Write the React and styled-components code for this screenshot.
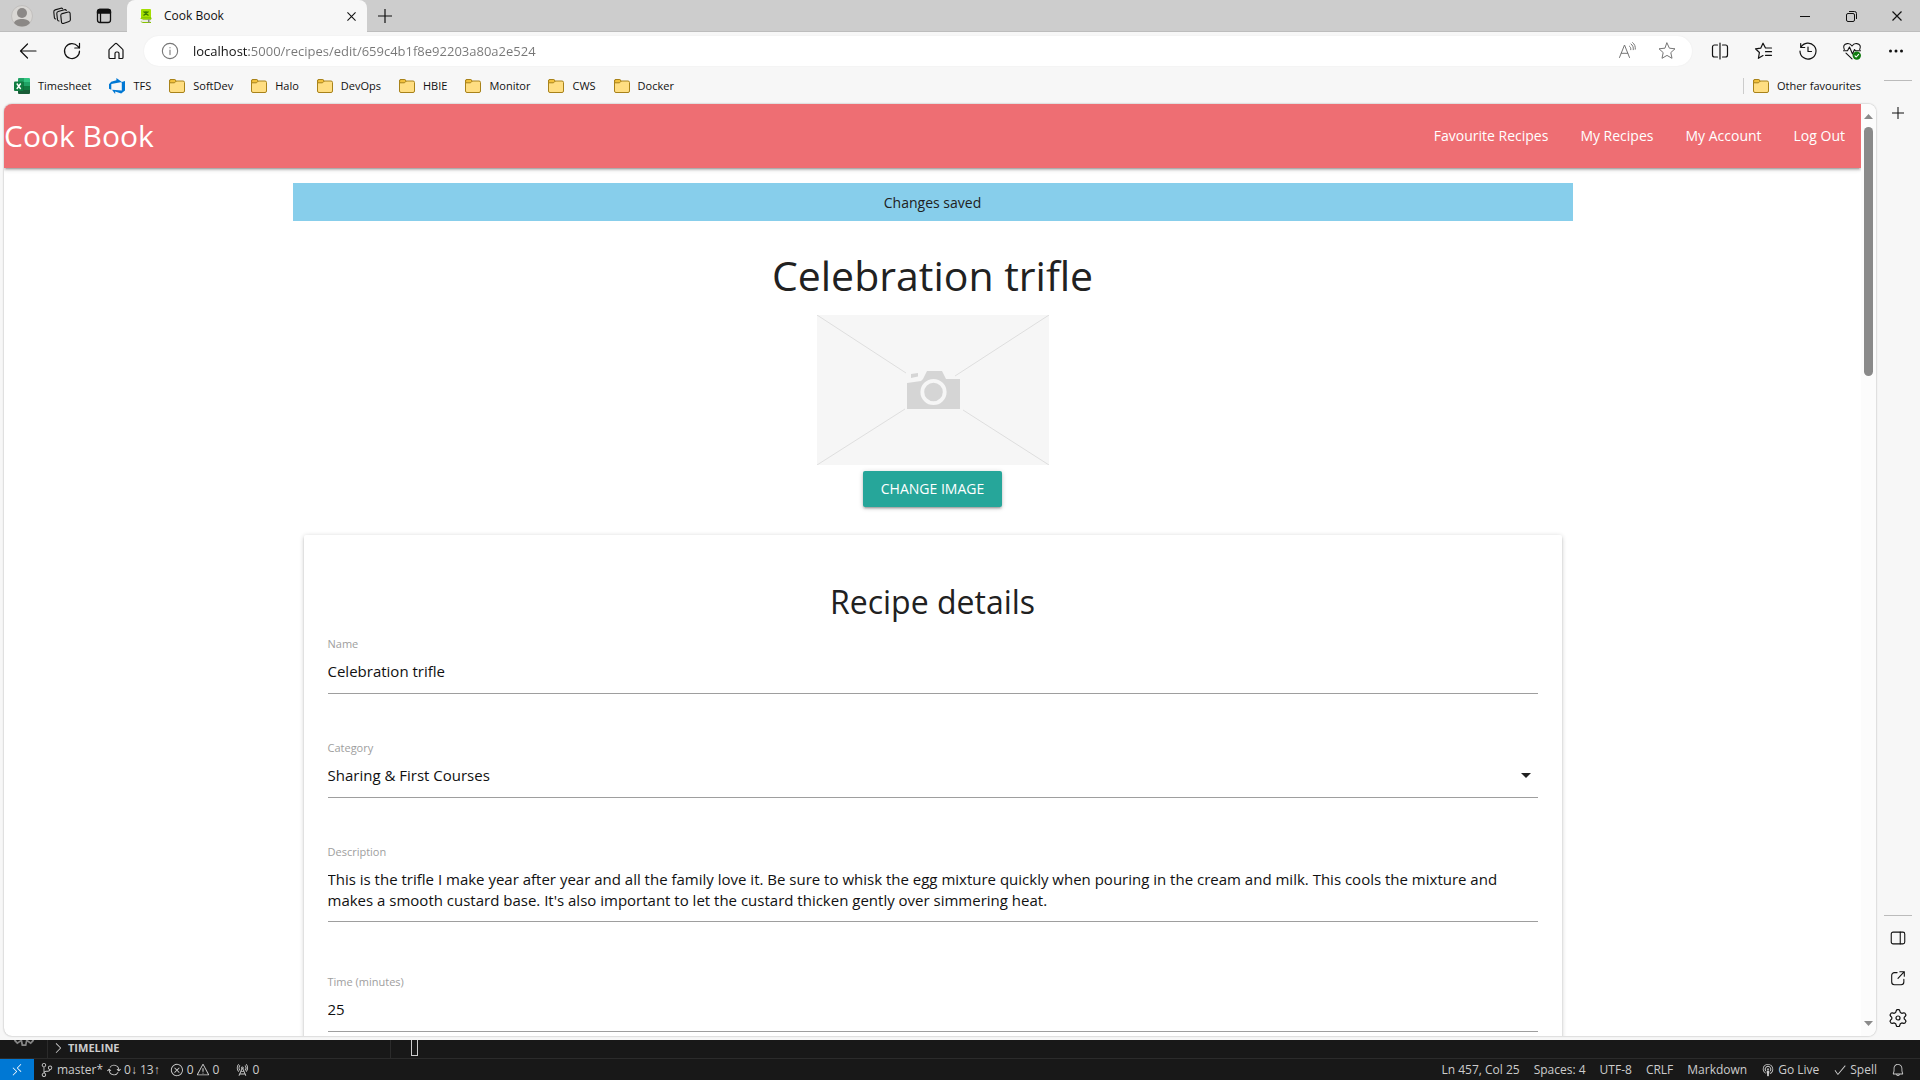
import React from "react";
import styled, { createGlobalStyle, css } from "styled-components";
import {
  VscRemote,
  VscSourceControl,
  VscSync,
  VscError,
  VscWarning,
  VscRadioTower,
  VscBroadcast,
  VscCheck,
  VscBell,
  VscChevronRight,
  VscSettingsGear,
} from "react-icons/vsc";

const Global = createGlobalStyle`
  *, *::before, *::after { box-sizing: border-box; }
  html, body { margin: 0; background: #181818; overflow: hidden; }
  body, button, input, select, textarea {
    font-family: "Open Sans", "Noto Sans", sans-serif;
  }
  h1, h2, ul { margin: 0; padding: 0; font-weight: 400; list-style: none; }
  a { color: inherit; text-decoration: none; }
  svg { display: block; flex: none; }
`;

/* ---------- browser window ---------- */

const Desktop = styled.div`
  height: 100vh;
  display: flex;
  flex-direction: column;
`;

const BrowserWindow = styled.div`
  flex: 1;
  min-height: 0;
  display: flex;
  flex-direction: column;
  background: #f7f7f7;
  color: #111;
`;

const PlainButton = styled.button`
  display: flex;
  align-items: center;
  justify-content: center;
  padding: 0;
  border: 0;
  background: none;
  color: inherit;
`;

const TabStrip = styled.div`
  display: flex;
  height: 32px;
  background: #cdcdcd;
  box-shadow: inset 0 -1px 0 #bdbdbd;
`;

const StripButton = styled(PlainButton)`
  width: ${(p) => p.$width || 42}px;
`;

const Tab = styled.div`
  display: flex;
  align-items: center;
  width: 240px;
  padding: 0 8px 0 12px;
  background: #f7f7f7;
  border-radius: 8px 8px 0 0;
  font-size: 12px;
  line-height: 32px;
`;

const TabTitle = styled.span`
  flex: 1;
  padding-left: 11px;
`;

const WindowControls = styled.div`
  display: flex;
  margin-left: auto;
`;

const Toolbar = styled.div`
  display: flex;
  align-items: center;
  height: 40px;
  padding: 0 2px 2px 6px;
`;

const ToolButton = styled(PlainButton)`
  width: 44px;
  height: 30px;
`;

const AddressBar = styled.form`
  flex: 1;
  display: flex;
  align-items: center;
  height: 30px;
  margin: 0 6px;
  padding: 0 5px 0 17px;
  border-radius: 15px;
  background: #fff;
  color: #767676;
  box-shadow: 0 0 2px rgba(0, 0, 0, 0.06);
`;

const AddressInput = styled.input`
  flex: 1;
  margin-left: 14px;
  padding: 0;
  border: 0;
  outline: 0;
  font-size: 13px;
  line-height: 20px;
  color: transparent;
  background: linear-gradient(90deg, #111 56px, #767676 56px);
  background-clip: text;
`;

const AddressButton = styled(PlainButton)`
  width: 40px;
  height: 30px;
`;

const Body = styled.div`
  flex: 1;
  min-height: 0;
  display: flex;
`;

const BodyMain = styled.div`
  flex: 1;
  min-width: 0;
  display: flex;
  flex-direction: column;
  padding: 0 0 4px 4px;
`;

const Bookmarks = styled.nav`
  display: flex;
  align-items: center;
  gap: 18px;
  height: 32px;
  padding: 0 15px 4px 10px;
  font-size: 11px;
  line-height: 16px;
`;

const Bookmark = styled.a`
  display: flex;
  align-items: center;
  gap: 8px;
  ${(p) =>
    p.$last &&
    css`
      margin-left: auto;
      padding-left: 9px;
      border-left: 1px solid #ccc;
    `}
`;

const Sidebar = styled.aside`
  display: flex;
  flex-direction: column;
  align-items: center;
  width: 44px;
  padding: 8px 1px 2px 0;
`;

const SideButton = styled(PlainButton)`
  width: 40px;
  height: 40px;
`;

const SideRule = styled.hr`
  width: 28px;
  margin: 0 0 2px;
  border: 0;
  border-top: 1px solid #bbb;
`;

const SideTop = styled.div`
  padding-top: 10px;
  flex: 1;
`;

const Viewport = styled.div`
  flex: 1;
  min-height: 0;
  display: flex;
  overflow: hidden;
  border-radius: 8px;
  background: #fff;
  box-shadow: 0 0 2px rgba(0, 0, 0, 0.35);
`;

const ScrollTrack = styled.div`
  display: flex;
  flex-direction: column;
  align-items: center;
  justify-content: space-between;
  width: 15px;
  padding: 10px 0;
  background: #fcfcfc;
`;

const ScrollThumb = styled.div`
  width: 9px;
  height: 249px;
  margin-top: 8px;
  border-radius: 5px;
  background: #8a8a8a;
`;

/* ---------- recipe page ---------- */

const Page = styled.div`
  flex: 1;
  min-width: 0;
  overflow: hidden;
  color: #212121;
`;

const NavBar = styled.nav`
  display: flex;
  align-items: center;
  justify-content: space-between;
  height: 64px;
  background: #ee6e73;
  color: #fff;
  box-shadow: 0 2px 2px rgba(0, 0, 0, 0.14), 0 3px 1px -2px rgba(0, 0, 0, 0.12),
    0 1px 5px rgba(0, 0, 0, 0.2);
`;

const Brand = styled.a`
  font-size: 30px;
  line-height: 66px;
`;

const NavLinks = styled.ul`
  display: flex;
  font-size: 14px;
  line-height: 66px;
`;

const NavLink = styled.a`
  display: block;
  padding: 0 16px;
`;

const Container = styled.main`
  max-width: 1280px;
  margin: 0 auto;
  padding-top: 15px;
`;

const Flash = styled.div`
  height: 38px;
  background: #87ceeb;
  font-size: 14px;
  line-height: 40px;
  text-align: center;
`;

const Hero = styled.section`
  display: flex;
  flex-direction: column;
  align-items: center;
`;

const PageTitle = styled.h1`
  margin: 27px 0 13px;
  font-size: 41px;
  line-height: 54px;
`;

const ChangeButton = styled.button`
  height: 36px;
  margin-top: 6px;
  padding: 0 18px;
  border: 0;
  border-radius: 2px;
  background: #26a69a;
  color: #fff;
  font-size: 14px;
  line-height: 36px;
  text-transform: uppercase;
  box-shadow: 0 2px 2px rgba(0, 0, 0, 0.14), 0 3px 1px -2px rgba(0, 0, 0, 0.12),
    0 1px 5px rgba(0, 0, 0, 0.2);
`;

const Card = styled.form`
  margin: 28px 11px 0;
  padding: 45px 24px;
  border-radius: 2px;
  box-shadow: 0 2px 2px rgba(0, 0, 0, 0.14), 0 3px 1px -2px rgba(0, 0, 0, 0.12),
    0 1px 5px rgba(0, 0, 0, 0.2);
`;

const CardTitle = styled.h2`
  margin-bottom: 12px;
  font-size: 32px;
  line-height: 44px;
  text-align: center;
`;

const Field = styled.div`
  display: flex;
  flex-direction: column;
  margin-bottom: ${(p) => (p.$tall ? 52 : 46)}px;
`;

const FieldLabel = styled.label`
  color: #9e9e9e;
  font-size: 11px;
  line-height: 16px;
`;

const control = css`
  width: 100%;
  margin: 0;
  border: 0;
  border-bottom: 1px solid #9e9e9e;
  border-radius: 0;
  outline: 0;
  background: transparent;
  color: #111;
  font-size: 15px;
`;

const TextInput = styled.input`
  ${control}
  height: 42px;
  padding: 0 0 4px;
`;

const SelectBox = styled.div`
  display: grid;
  align-items: center;

  > * {
    grid-area: 1 / 1;
  }

  > svg {
    justify-self: end;
    margin-right: 7px;
    margin-bottom: 3px;
    pointer-events: none;
  }
`;

const Select = styled.select`
  ${control}
  height: 42px;
  padding: 0 0 4px;
  appearance: none;
`;

const TextArea = styled.textarea`
  ${control}
  display: block;
  height: 62px;
  padding: 9px 0 10px;
  line-height: 21px;
  overflow: hidden;
  resize: none;
`;

/* ---------- editor behind the browser ---------- */

const Editor = styled.footer`
  height: 40px;
  background: #181818;
  color: #ccc;
  font-size: 12px;
`;

const Panel = styled.div`
  display: flex;
  height: 19px;
  overflow: hidden;
  border-bottom: 1px solid #2b2b2b;
`;

const ActivityEdge = styled.div`
  display: flex;
  align-items: flex-end;
  justify-content: center;
  width: 47px;
  height: 6px;
  color: #868686;
`;

const TimelineRow = styled(PlainButton)`
  justify-content: flex-start;
  gap: 2px;
  width: 344px;
  padding: 0 0 3px 2px;
  border: solid #2b2b2b;
  border-width: 0 1px;
  font-size: 11px;
  font-weight: 700;
`;

const Cursor = styled.div`
  width: 7px;
  height: 16px;
  margin-left: 20px;
  border: 1px solid #ccc;
  border-top: 0;
`;

const StatusBar = styled.div`
  display: flex;
  align-items: center;
  height: 21px;
  padding-right: 15px;
  line-height: 20px;
`;

const RemoteButton = styled(PlainButton)`
  width: 34px;
  height: 21px;
  margin-right: 6px;
  background: #0078d4;
  color: #fff;
`;

const StatusItem = styled(PlainButton)`
  gap: 3px;
  margin-right: ${(p) => p.$gap || 16}px;
  font-size: 12px;
  white-space: pre;
`;

const StatusRight = styled.div`
  display: flex;
  align-items: center;
  gap: 14px;
  margin-left: auto;

  > button {
    margin: 0;
  }
`;

/* ---------- drawings ---------- */

function Icon({ size = 20, width = 1, children, ...rest }) {
  return (
    <svg
      width={size}
      height={size}
      viewBox="0 0 20 20"
      fill="none"
      stroke="currentColor"
      strokeWidth={width}
      strokeLinecap="round"
      strokeLinejoin="round"
      aria-hidden="true"
      {...rest}
    >
      {children}
    </svg>
  );
}

const Avatar = () => (
  <svg width="22" height="22" viewBox="0 0 22 22" aria-hidden="true">
    <circle cx="11" cy="11" r="10.5" fill="#d9d7d4" stroke="#c1bfbd" />
    <circle cx="11" cy="8" r="5" fill="#8b8886" />
    <path d="M3 18c1-3 4-4 8-4s7 1 8 4c-2 2.400-5 3.500-8 3.500S5 20.400 3 18z" fill="#8b8886" />
  </svg>
);

const Workspaces = () => (
  <Icon width={1.1}>
    <path d="M10.200 7.600l6-1.600a1.500 1.500 0 0 1 1.900 1.300l.3 6.200a2 2 0 0 1-1.400 2l-5.600 1.900a1.500 1.500 0 0 1-1.900-1.300l-.7-6.500a2 2 0 0 1 1.400-2z" />
    <path d="M7 15a1.500 1.500 0 0 1-1.500-1.300L4.800 7.600a2 2 0 0 1 1.400-2.100l6.300-1.800a1.500 1.500 0 0 1 1.800.8" />
    <path d="M3.700 13a1.500 1.500 0 0 1-1.300-1.300L1.800 6a2 2 0 0 1 1.400-2.100l5.700-1.700a1.500 1.500 0 0 1 1.700.6" />
  </Icon>
);

const TabActions = () => (
  <Icon width={1.3}>
    <rect x="3.500" y="3.500" width="13" height="13" rx="2.500" />
    <path d="M3.500 6V5.500a2 2 0 0 1 2-2h9a2 2 0 0 1 2 2V7h-13z" fill="currentColor" />
    <path d="M6.500 7v9" />
  </Icon>
);

const Favicon = () => (
  <svg width="14" height="16" viewBox="0 0 14 16" aria-hidden="true">
    <path d="M3 1h8a1 1 0 0 1 1 1v9H2V2a1 1 0 0 1 1-1z" fill="#a4de02" />
    <path d="M2 11h10v3.500H3.500A1.500 1.500 0 0 1 2 13z" fill="#e9e9e2" />
    <path d="M2 11c0-1 .6-1.300 1.400-1.300H12v1.500H3.500M2.200 13.500c.3.800.8 1 1.500 1H12" stroke="#86c400" fill="none" />
    <path d="M4.500 3.500l5 4M9.500 3.500l-5 4M7 3v3" stroke="#3b7d00" strokeWidth="1.300" fill="none" />
    <path d="M9 11.500h1.500V15l-.8-.8-.7.800z" fill="#888" />
  </svg>
);

const Cross = ({ size = 10 }) => (
  <svg width={size} height={size} viewBox="0 0 10 10" stroke="currentColor" strokeWidth="1.200" aria-hidden="true">
    <path d="M.5.5l9 9M9.500.5l-9 9" />
  </svg>
);

const Plus = ({ size = 14 }) => (
  <svg width={size} height={size} viewBox="0 0 14 14" stroke="currentColor" strokeWidth="1.200" aria-hidden="true">
    <path d="M7 0v14M0 7h14" />
  </svg>
);

const Minimize = () => (
  <svg width="10" height="10" viewBox="0 0 10 10" stroke="currentColor" aria-hidden="true">
    <path d="M0 5.500h10" />
  </svg>
);

const Restore = () => (
  <svg width="11" height="11" viewBox="0 0 11 11" fill="none" stroke="currentColor" aria-hidden="true">
    <rect x=".5" y="2.500" width="8" height="8" rx="1.500" />
    <path d="M3 .5h5.500a2 2 0 0 1 2 2V8" />
  </svg>
);

const BackIcon = () => (
  <Icon width={1.2}>
    <path d="M18 10H2.500M9.500 3 2.500 10l7 7" />
  </Icon>
);

const ReloadIcon = () => (
  <Icon width={1.2}>
    <path d="M17.500 10A7.500 7.500 0 1 1 15.700 5.200L17.300 7M17.500 2.300V7h-4.700" />
  </Icon>
);

const HomeIcon = () => (
  <Icon width={1.2}>
    <path d="M3 9.200a1.500 1.500 0 0 1 .5-1.100l5.500-5.200a1.500 1.500 0 0 1 2 0l5.500 5.200a1.500 1.500 0 0 1 .5 1.100v7.300a1 1 0 0 1-1 1h-3v-5a1.500 1.500 0 0 0-1.500-1.500h-1a1.500 1.500 0 0 0-1.500 1.500v5H4a1 1 0 0 1-1-1z" />
  </Icon>
);

const InfoIcon = () => (
  <Icon size={18} width={1.2}>
    <circle cx="10" cy="10" r="8.500" />
    <path d="M10 9v5M10 6.200v.3" />
  </Icon>
);

const ReadAloudIcon = () => (
  <Icon>
    <path d="M2.500 16.500 7.500 4l5 12.500M4.200 12.300h6.600M12.500 5.200c1 .8 1.500 2 1.300 3.500M14 3c1.800 1.300 2.600 3.300 2.300 5.700M15.600 1.600c2.100 1.600 3 4 2.700 6.600" />
  </Icon>
);

const StarIcon = () => (
  <Icon>
    <path d="M10 2l2.400 5.200 5.600.6-4.200 3.800 1.200 5.700L10 14.400l-5 2.900 1.200-5.700L2 7.800l5.600-.6z" />
  </Icon>
);

const SplitIcon = () => (
  <Icon width={1.2}>
    <path d="M7.500 4H4.500a2 2 0 0 0-2 2v8a2 2 0 0 0 2 2h3M12.500 4h3a2 2 0 0 1 2 2v8a2 2 0 0 1-2 2h-3M10 2v16" />
  </Icon>
);

const FavouritesIcon = () => (
  <Icon width={1.2}>
    <path d="M17.500 7h-6L9 2.200 6.700 7.200l-5.200.6 3.900 3.700-1 5.800L9 14.600M11.500 10.700h6M11.500 14.300h6" />
  </Icon>
);

const HistoryIcon = () => (
  <Icon width={1.2}>
    <path d="M3 6.200A8 8 0 1 1 2 10M2.700 2.500v4h4M10 6v4.500h3.500" />
  </Icon>
);

const HealthIcon = () => (
  <Icon width={1.1}>
    <path d="M2.300 8.500C.8 5.500 2 3 5.200 2.600 7.400 2.300 9 3.500 10 5c1-1.500 2.600-2.700 4.800-2.400 3.200.4 4.400 2.900 2.900 5.900M4 12.200l6 5.600M1.500 9.800h4L7.500 6l3 7 2-4.500 1 1.300h5" />
    <circle cx="14.800" cy="14.600" r="4.200" fill="#107c10" stroke="none" />
    <path d="M13 14.800l1.300 1.200 2.300-2.600" stroke="#fff" />
  </Icon>
);

const MoreIcon = () => (
  <Icon>
    <g fill="currentColor" stroke="none">
      <circle cx="4.500" cy="10" r="1.500" />
      <circle cx="10" cy="10" r="1.500" />
      <circle cx="15.500" cy="10" r="1.500" />
    </g>
  </Icon>
);

const ExcelIcon = () => (
  <svg width="16" height="16" viewBox="0 0 16 16" aria-hidden="true">
    <path d="M4 1a1 1 0 0 1 1-1h5v8H4z" fill="#21a366" />
    <path d="M10 0h5a1 1 0 0 1 1 1v3h-6z" fill="#33c481" />
    <path d="M10 4h6v4h-6z" fill="#21a366" />
    <path d="M4 4h6v4H4zM10 8h6v4h-6z" fill="#107c41" />
    <path d="M4 8h6v4h6v3a1 1 0 0 1-1 1H5a1 1 0 0 1-1-1z" fill="#185c37" />
    <rect y="3.500" width="9.500" height="9.500" rx="1" fill="#107c41" />
    <path d="M2.800 5.500 6.700 11M6.700 5.500 2.800 11" stroke="#fff" strokeWidth="1.400" />
  </svg>
);

const DevOpsIcon = () => (
  <svg width="16" height="16" viewBox="0 0 16 16" fill="#0078d4" aria-hidden="true">
    <path d="M16 3v9.400L12.200 15.600 6.200 13.500V16L3 11.700l9.800.8V4zM12.900 3.900 7.400 0v2.200L2.200 3.800 0 6.200v4.600l2.300 1V5.900z" />
  </svg>
);

const FolderIcon = () => (
  <svg width="16" height="14" viewBox="0 0 16 14" fill="#ffde82" stroke="#a8821a" aria-hidden="true">
    <path d="M2 .5h3.700L7.500 2H14a1.500 1.500 0 0 1 1.500 1.500V12a1.500 1.500 0 0 1-1.500 1.500H2A1.500 1.500 0 0 1 .5 12V2A1.500 1.500 0 0 1 2 .5z" />
    <path d="M.5 2A1.500 1.500 0 0 1 2 .5h3.500L7.300 2 5.500 3.800H.8z" fill="#f2c13c" />
  </svg>
);

const PanelIcon = () => (
  <Icon size={18} width={1.2}>
    <rect x="2.500" y="3.500" width="15" height="13" rx="2" />
    <path d="M12.500 3.500v13" />
  </Icon>
);

const ExternalIcon = () => (
  <Icon size={18} width={1.2}>
    <path d="M9 4H6a3 3 0 0 0-3 3v7.500a3 3 0 0 0 3 3h7.500a3 3 0 0 0 3-3V11.500M12 3h5v5M17 3l-7 7.500" />
  </Icon>
);

const GearIcon = () => (
  <Icon width={1.2}>
    <path d="M8.300 2.600 8.800 1.700h2.400l.5.900.6 1.800 1.500.9 1.900-.4 1.100.1 1.200 2-.5 1-1.300 1.300v1.600l1.300 1.300.5 1-1.200 2-1.100.1-1.900-.4-1.500.9-.6 1.800-.5.900H8.800l-.5-.9-.6-1.800-1.500-.9-1.900.4-1.100-.1-1.200-2 .5-1 1.300-1.300V9.300L2.500 8l-.5-1 1.200-2 1.100-.1 1.900.4 1.500-.9z" />
    <circle cx="10" cy="10" r="2" />
  </Icon>
);

const Caret = ({ up, width = 9, height = 5, color = "#8a8a8a" }) => (
  <svg width={width} height={height} viewBox="0 0 10 5" preserveAspectRatio="none" fill={color} aria-hidden="true">
    <path d={up ? "M0 5 5 0l5 5z" : "M0 0h10L5 5z"} />
  </svg>
);

const Placeholder = () => (
  <svg width="232" height="150" viewBox="0 0 232 150" role="img" aria-label="Recipe image placeholder">
    <rect width="232" height="150" fill="#f6f6f6" />
    <path d="M0 0l89 58M232 0l-94 61M0 150l88-56M232 150l-86-55" stroke="#dedede" />
    <g fill="#d5d5d5">
      <path d="M90 68l14-2 2-2 4-8h15l4 8h14v30H90z" />
      <path d="M94 59l7-1v3.500l-7 1.500z" />
      <circle cx="116.500" cy="77" r="11.200" stroke="#f6f6f6" strokeWidth="3.800" />
    </g>
  </svg>
);

/* ---------- content ---------- */

const bookmarks = [
  ["Timesheet", ExcelIcon],
  ["TFS", DevOpsIcon],
  ["SoftDev", FolderIcon],
  ["Halo", FolderIcon],
  ["DevOps", FolderIcon],
  ["HBIE", FolderIcon],
  ["Monitor", FolderIcon],
  ["CWS", FolderIcon],
  ["Docker", FolderIcon],
];

const navLinks = ["Favourite Recipes", "My Recipes", "My Account", "Log Out"];

const description =
  "This is the trifle I make year after year and all the family love it. Be sure to whisk the egg mixture quickly when pouring in the cream and milk. This cools the mixture and makes a smooth custard base. It's also important to let the custard thicken gently over simmering heat.";

const BrowserChrome = () => (
  <>
    <TabStrip>
      <StripButton $width={43} aria-label="Profile"><Avatar /></StripButton>
      <StripButton $width={38} aria-label="Workspaces"><Workspaces /></StripButton>
      <StripButton $width={46} aria-label="Tab actions"><TabActions /></StripButton>
      <Tab>
        <Favicon />
        <TabTitle>Cook Book</TabTitle>
        <StripButton $width={16} aria-label="Close tab"><Cross size={9} /></StripButton>
      </Tab>
      <StripButton $width={36} aria-label="New tab"><Plus /></StripButton>
      <WindowControls>
        <StripButton $width={46} aria-label="Minimize"><Minimize /></StripButton>
        <StripButton $width={46} aria-label="Restore"><Restore /></StripButton>
        <StripButton $width={46} aria-label="Close"><Cross /></StripButton>
      </WindowControls>
    </TabStrip>
    <Toolbar>
      <ToolButton aria-label="Back"><BackIcon /></ToolButton>
      <ToolButton aria-label="Refresh"><ReloadIcon /></ToolButton>
      <ToolButton aria-label="Home"><HomeIcon /></ToolButton>
      <AddressBar>
        <InfoIcon />
        <AddressInput aria-label="Address" defaultValue="localhost:5000/recipes/edit/659c4b1f8e92203a80a2e524" spellCheck={false} />
        <AddressButton type="button" aria-label="Read aloud"><ReadAloudIcon /></AddressButton>
        <AddressButton type="button" aria-label="Add to favourites"><StarIcon /></AddressButton>
      </AddressBar>
      <ToolButton aria-label="Split screen"><SplitIcon /></ToolButton>
      <ToolButton aria-label="Favourites"><FavouritesIcon /></ToolButton>
      <ToolButton aria-label="History"><HistoryIcon /></ToolButton>
      <ToolButton aria-label="Browser essentials"><HealthIcon /></ToolButton>
      <ToolButton aria-label="More"><MoreIcon /></ToolButton>
    </Toolbar>
  </>
);

const RecipePage = () => (
  <Page>
    <NavBar>
      <Brand href="#home">Cook Book</Brand>
      <NavLinks>
        {navLinks.map((text) => (
          <li key={text}><NavLink href="#nav">{text}</NavLink></li>
        ))}
      </NavLinks>
    </NavBar>
    <Container>
      <Flash role="status">Changes saved</Flash>
      <Hero>
        <PageTitle>Celebration trifle</PageTitle>
        <Placeholder />
        <ChangeButton type="button">Change image</ChangeButton>
      </Hero>
      <Card>
        <CardTitle>Recipe details</CardTitle>
        <Field>
          <FieldLabel htmlFor="name">Name</FieldLabel>
          <TextInput id="name" defaultValue="Celebration trifle" />
        </Field>
        <Field>
          <FieldLabel htmlFor="category">Category</FieldLabel>
          <SelectBox>
            <Select id="category" defaultValue="sharing">
              <option value="sharing">Sharing &amp; First Courses</option>
            </Select>
            <Caret width={10} color="#212121" />
          </SelectBox>
        </Field>
        <Field $tall>
          <FieldLabel htmlFor="description">Description</FieldLabel>
          <TextArea id="description" defaultValue={description} spellCheck={false} />
        </Field>
        <Field>
          <FieldLabel htmlFor="time">Time (minutes)</FieldLabel>
          <TextInput id="time" defaultValue="25" />
        </Field>
      </Card>
    </Container>
  </Page>
);

const EditorStrip = () => (
  <Editor>
    <Panel>
      <ActivityEdge><VscSettingsGear size={24} /></ActivityEdge>
      <TimelineRow><VscChevronRight size={16} />TIMELINE</TimelineRow>
      <Cursor />
    </Panel>
    <StatusBar>
      <RemoteButton aria-label="Remote"><VscRemote size={14} /></RemoteButton>
      <StatusItem $gap={4}><VscSourceControl size={14} />master*</StatusItem>
      <StatusItem $gap={10}><VscSync size={14} />0↓ 13↑</StatusItem>
      <StatusItem $gap={2}><VscError size={14} />0</StatusItem>
      <StatusItem $gap={16}><VscWarning size={14} />0</StatusItem>
      <StatusItem><VscRadioTower size={14} />0</StatusItem>
      <StatusRight>
        <StatusItem>Ln 457, Col 25</StatusItem>
        <StatusItem>Spaces: 4</StatusItem>
        <StatusItem>UTF-8</StatusItem>
        <StatusItem>CRLF</StatusItem>
        <StatusItem>Markdown</StatusItem>
        <StatusItem><VscBroadcast size={14} />Go Live</StatusItem>
        <StatusItem><VscCheck size={14} />Spell</StatusItem>
        <StatusItem aria-label="Notifications"><VscBell size={14} /></StatusItem>
      </StatusRight>
    </StatusBar>
  </Editor>
);

export default function App() {
  return (
    <Desktop>
      <Global />
      <BrowserWindow>
        <BrowserChrome />
        <Body>
          <BodyMain>
            <Bookmarks>
              {bookmarks.map(([text, Mark]) => (
                <Bookmark key={text} href="#bookmark"><Mark />{text}</Bookmark>
              ))}
              <Bookmark $last href="#bookmark"><FolderIcon />Other favourites</Bookmark>
            </Bookmarks>
            <Viewport>
              <RecipePage />
              <ScrollTrack>
                <div>
                  <Caret up />
                  <ScrollThumb />
                </div>
                <Caret />
              </ScrollTrack>
            </Viewport>
          </BodyMain>
          <Sidebar>
            <SideRule />
            <SideTop>
              <SideButton aria-label="Customise sidebar"><Plus size={12} /></SideButton>
            </SideTop>
            <SideRule />
            <SideButton aria-label="Sidebar"><PanelIcon /></SideButton>
            <SideButton aria-label="Open link"><ExternalIcon /></SideButton>
            <SideButton aria-label="Settings"><GearIcon /></SideButton>
          </Sidebar>
        </Body>
      </BrowserWindow>
      <EditorStrip />
    </Desktop>
  );
}
